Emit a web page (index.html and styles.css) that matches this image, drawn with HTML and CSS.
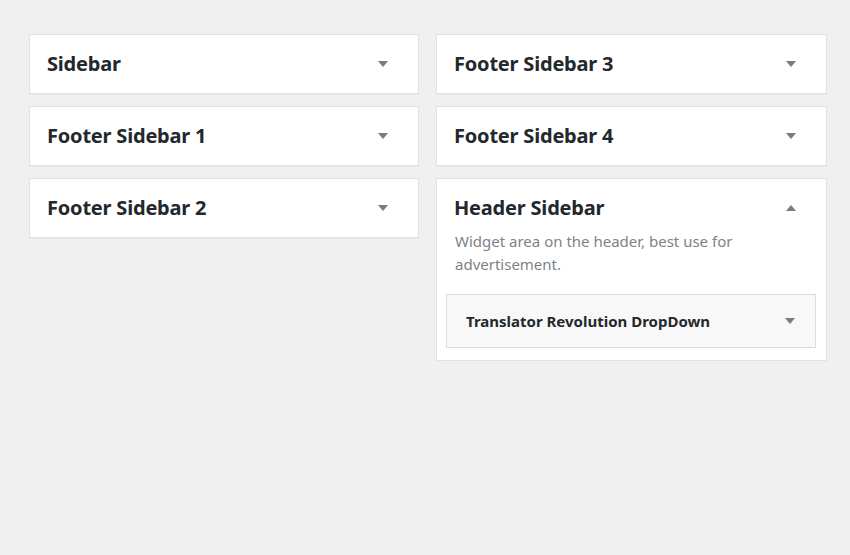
FILE: index.html
```html
<!DOCTYPE html>
<html>
<head>
<meta charset="utf-8">
<link rel="stylesheet" href="styles.css">
</head>
<body>
<div class="holder">
  <div class="col">
    <div class="area"><div class="area-head"><h2>Sidebar</h2><span class="arrow down"></span></div></div>
    <div class="area"><div class="area-head"><h2>Footer Sidebar 1</h2><span class="arrow down"></span></div></div>
    <div class="area"><div class="area-head"><h2>Footer Sidebar 2</h2><span class="arrow down"></span></div></div>
  </div>
  <div class="col">
    <div class="area"><div class="area-head"><h2>Footer Sidebar 3</h2><span class="arrow down"></span></div></div>
    <div class="area"><div class="area-head"><h2>Footer Sidebar 4</h2><span class="arrow down"></span></div></div>
    <div class="area open">
      <div class="area-head"><h2>Header Sidebar</h2><span class="arrow up"></span></div>
      <p class="desc">Widget area on the header, best use for advertisement.</p>
      <div class="widget"><h3>Translator Revolution DropDown</h3><span class="arrow down"></span></div>
    </div>
  </div>
</div>
</body>
</html>
```

FILE: styles.css
```css
html, body {
  margin: 0;
  background: #f0f0f0;
  font-family: "Noto Sans", "Open Sans", sans-serif;
  color: #23282d;
}
.holder {
  display: grid;
  grid-template-columns: 390px 391px;
  column-gap: 17px;
  padding: 34px 0 0 29px;
  align-items: start;
}
.col {
  display: flex;
  flex-direction: column;
  gap: 12px;
}
.area {
  background: #fff;
  border: 1px solid #e2e2e2;
  box-shadow: 0 1px 1px rgba(0,0,0,0.04);
}
.area-head {
  height: 58px;
  display: flex;
  align-items: center;
  justify-content: space-between;
  padding: 0 30px 0 17px;
}
.area-head h2 {
  margin: 0;
  font-size: 20px;
  font-weight: 700;
  letter-spacing: -0.2px;
  line-height: 1;
}
.arrow {
  width: 0;
  height: 0;
  border-left: 5px solid transparent;
  border-right: 5px solid transparent;
}
.arrow.down { border-top: 6px solid #787c82; }
.arrow.up { border-bottom: 6px solid #787c82; }
.desc {
  margin: -7px 0 0;
  padding: 0 40px 0 18px;
  font-size: 15px;
  line-height: 23px;
  color: #7e8287;
}
.widget {
  margin: 18px 10px 12px 9px;
  height: 52px;
  background: #f8f8f8;
  border: 1px solid #dcdcde;
  display: flex;
  align-items: center;
  justify-content: space-between;
  padding: 0 20px 0 19px;
}
.widget h3 {
  margin: 0;
  font-size: 15px;
  font-weight: 700;
  line-height: 1;
}
```
